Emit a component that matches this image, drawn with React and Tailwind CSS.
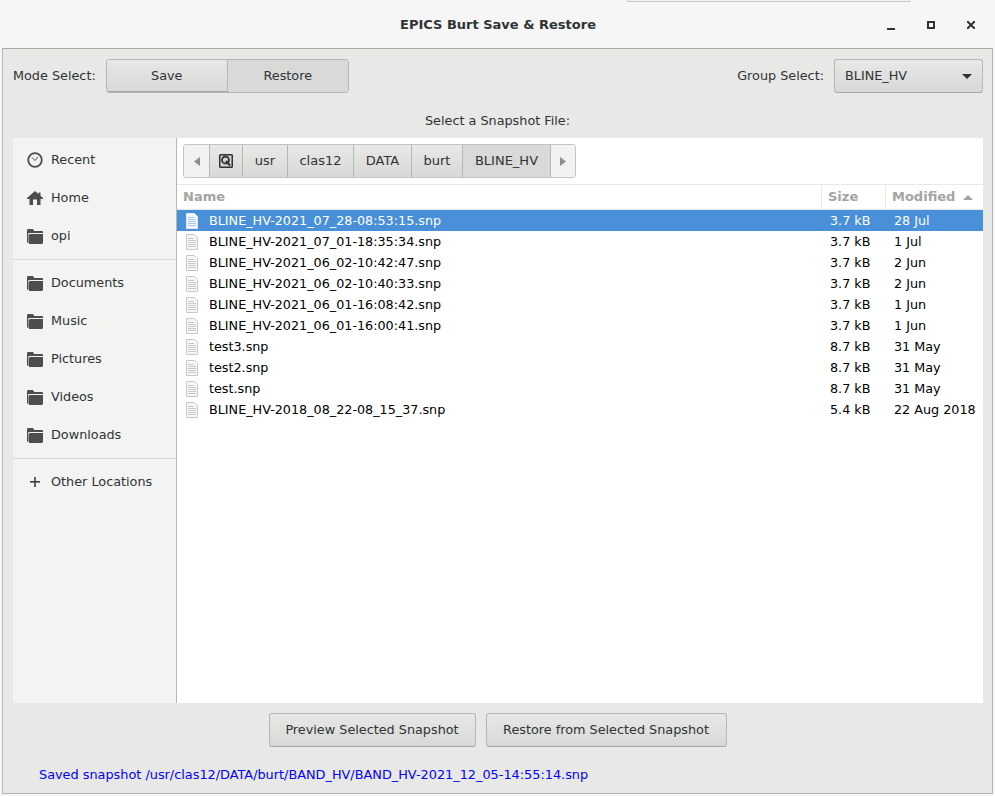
import React from 'react';

const files = [
  { name: 'BLINE_HV-2021_07_28-08:53:15.snp', size: '3.7 kB', date: '28 Jul' },
  { name: 'BLINE_HV-2021_07_01-18:35:34.snp', size: '3.7 kB', date: '1 Jul' },
  { name: 'BLINE_HV-2021_06_02-10:42:47.snp', size: '3.7 kB', date: '2 Jun' },
  { name: 'BLINE_HV-2021_06_02-10:40:33.snp', size: '3.7 kB', date: '2 Jun' },
  { name: 'BLINE_HV-2021_06_01-16:08:42.snp', size: '3.7 kB', date: '1 Jun' },
  { name: 'BLINE_HV-2021_06_01-16:00:41.snp', size: '3.7 kB', date: '1 Jun' },
  { name: 'test3.snp', size: '8.7 kB', date: '31 May' },
  { name: 'test2.snp', size: '8.7 kB', date: '31 May' },
  { name: 'test.snp', size: '8.7 kB', date: '31 May' },
  { name: 'BLINE_HV-2018_08_22-08_15_37.snp', size: '5.4 kB', date: '22 Aug 2018' },
];

function FolderIcon() {
  return (
    <svg width="16" height="16" viewBox="0 0 16 16">
      <path d="M0 2.500C0 1.700.5 1 1.300 1H6l1.200 2H15c.6 0 1 .4 1 1v1H2.500C1.700 5 1 5.700 1 6.500V15C.4 14.800 0 14.300 0 13.700z" fill="#4d4d4d" />
      <path d="M2 7C2 6.400 2.400 6 3 6h13v8.500c0 .8-.6 1.500-1.400 1.500H2z" fill="#4d4d4d" />
      <path d="M1.500 7v8" stroke="#9a9a98" />
    </svg>
  );
}

function ClockIcon() {
  return (
    <svg width="16" height="16" viewBox="0 0 16 16" fill="none" stroke="#4d4d4d">
      <circle cx="8" cy="8" r="6.800" strokeWidth="1.800" />
      <path d="M5 5.500 8 8.500l3-3.500" strokeWidth="1" />
    </svg>
  );
}

function HomeIcon() {
  return (
    <svg width="16" height="16" viewBox="0 0 16 16" fill="#4d4d4d">
      <path d="M8 1 0 8v1h2.500v6h11V9H16V8l-2.500-2.200V2.500h-2V4zM6 9.500h4V15H6z" fillRule="evenodd" />
    </svg>
  );
}

function PlusIcon() {
  return (
    <svg width="16" height="16" viewBox="0 0 16 16" fill="#3d3d3d">
      <rect x="3" y="7" width="10" height="1.600" />
      <rect x="7.200" y="3" width="1.600" height="10" />
    </svg>
  );
}

function FileIcon({ selected }) {
  const edge = selected ? '#dfe8f3' : '#c8c8c6';
  const fill = selected ? '#f4f7fb' : '#f7f7f6';
  const line = selected ? '#a9c4e6' : '#c8c8c6';
  return (
    <svg width="16" height="16" viewBox="0 0 16 16">
      <path d="M1.500.500h8l3 3v12h-11z" fill={fill} stroke={edge} />
      <path d="M3 4.500h6M3 6.500h8M3 8.500h8M3 10.500h8M3 12.500h8" stroke={line} />
    </svg>
  );
}

function DiskIcon() {
  return (
    <svg width="16" height="16" viewBox="0 0 16 16">
      <rect x="1" y="1" width="14" height="14" rx="1.500" fill="#2e3436" />
      <rect x="2.500" y="2.500" width="11" height="11" fill="#d4d4d2" />
      <circle cx="7.500" cy="7" r="3.500" fill="none" stroke="#2e3436" strokeWidth="1.800" />
      <path d="m8 8 4 4.500" stroke="#2e3436" strokeWidth="2" />
    </svg>
  );
}

function SidebarItem({ icon, label }) {
  return (
    <div className="flex h-[38px] items-center pl-[14px] text-[12.8px] text-[#2e3436]">
      {icon}
      <span className="ml-2">{label}</span>
    </div>
  );
}

function PathSegment({ children, active, className = '' }) {
  return (
    <div className={`flex h-full items-center justify-center border-r border-[#b6b6b3] text-[13px] text-[#2e3436] ${active ? 'bg-[#d9d9d7]' : 'bg-gradient-to-b from-[#e8e8e7] to-[#d8d8d6]'} ${className}`}>
      {children}
    </div>
  );
}

function PushButton({ children, className = '' }) {
  return (
    <button className={`flex h-[34px] items-center justify-center rounded-[3px] border border-[#b6b6b3] border-b-[#a5a5a2] bg-gradient-to-b from-[#e8e8e7] to-[#d8d8d6] text-[12.8px] text-[#2e3436] ${className}`}>
      {children}
    </button>
  );
}

export default function App() {
  return (
    <div className="relative flex h-[796px] w-[995px] flex-col overflow-hidden bg-[#f6f6f6] font-['DejaVu_Sans',sans-serif]">
      {/* bit of a menu from another window showing at the top */}
      <div className="absolute left-[626px] top-0 h-[2px] w-[285px] rounded-b-sm border-b border-[#c8c8c8] bg-[#f0f0f0]" />

      <div className="flex h-[48px] shrink-0 items-center pl-[400px] pr-[20px] pt-[2px]">
        <span className="text-[13px] font-bold text-[#2e3436]">EPICS Burt Save &amp; Restore</span>
        <div className="ml-auto flex items-center gap-[32px]">
          <div className="mt-[8px] h-[2px] w-[8px] bg-[#2e3436]" />
          <div className="h-[8px] w-[8px] border-2 border-[#2e3436]" />
          <svg width="8" height="8" viewBox="0 0 8 8" stroke="#2e3436" strokeWidth="2">
            <path d="M0 0l8 8M8 0l-8 8" />
          </svg>
        </div>
      </div>

      <div className="mx-[2px] mb-[2px] flex min-h-0 flex-1 flex-col border border-t-[#a8a8a3] border-x-[#b6b6b3] border-b-[#b6b6b3] bg-[#e8e8e7]">
        <div className="flex items-center pl-[10px] pr-[9px] pt-[10px] text-[12.8px] text-[#2e3436]">
          <span>Mode Select:</span>
          <div className="ml-[10px] flex h-[34px] w-[243px] overflow-hidden rounded-[3px] border border-[#b6b6b3]">
            <div className="flex w-[121px] items-center justify-center border-r border-[#b6b6b3] border-b border-b-[#a5a5a2] bg-gradient-to-b from-[#e8e8e7] to-[#d8d8d6]">Save</div>
            <div className="flex flex-1 items-center justify-center bg-[#d9d9d7]">Restore</div>
          </div>
          <span className="ml-auto">Group Select:</span>
          <PushButton className="ml-[10px] w-[149px] !justify-between pl-[10px] pr-[10px]">
            <span>BLINE_HV</span>
            <svg width="10" height="5" viewBox="0 0 10 5" fill="#2e3436"><path d="M0 0h10L5 5z" /></svg>
          </PushButton>
        </div>

        <div className="pt-[18px] text-center text-[12.8px] leading-[19px] text-[#2e3436]">Select a Snapshot File:</div>

        <div className="ml-[10px] mr-[9px] mt-[8px] flex h-[565px] bg-white">
          <div className="w-[164px] shrink-0 border-r border-[#b6b6b3] bg-[#f3f3f2] pt-[3px]">
            <SidebarItem icon={<ClockIcon />} label="Recent" />
            <SidebarItem icon={<HomeIcon />} label="Home" />
            <SidebarItem icon={<FolderIcon />} label="opi" />
            <div className="my-[4px] h-px bg-[#d9d9d7]" />
            <SidebarItem icon={<FolderIcon />} label="Documents" />
            <SidebarItem icon={<FolderIcon />} label="Music" />
            <SidebarItem icon={<FolderIcon />} label="Pictures" />
            <SidebarItem icon={<FolderIcon />} label="Videos" />
            <SidebarItem icon={<FolderIcon />} label="Downloads" />
            <div className="my-[4px] h-px bg-[#d9d9d7]" />
            <SidebarItem icon={<PlusIcon />} label="Other Locations" />
          </div>

          <div className="flex min-w-0 flex-1 flex-col">
            <div className="h-[47px] shrink-0 border-b border-[#e8e8e7] px-[6px] pt-[6px]">
              <div className="flex h-[34px] w-[393px] overflow-hidden rounded-[3px] border border-[#c4c4c1]">
                <div className="flex h-full w-[26px] items-center justify-center border-r border-[#b6b6b3] bg-[#f2f2f1]">
                  <svg width="6" height="9" viewBox="0 0 6 9" fill="#8d8f8c"><path d="M6 0v9L0 4.500z" /></svg>
                </div>
                <PathSegment className="w-[33px]"><DiskIcon /></PathSegment>
                <PathSegment className="w-[45px]">usr</PathSegment>
                <PathSegment className="w-[66px]">clas12</PathSegment>
                <PathSegment className="w-[58px]">DATA</PathSegment>
                <PathSegment className="w-[51px]">burt</PathSegment>
                <PathSegment active className="w-[88px]">BLINE_HV</PathSegment>
                <div className="flex h-full flex-1 items-center justify-center bg-[#f2f2f1]">
                  <svg width="6" height="9" viewBox="0 0 6 9" fill="#8d8f8c"><path d="M0 0v9l6-4.500z" /></svg>
                </div>
              </div>
            </div>

            <div className="flex h-[25px] shrink-0 border-b border-[#e8e8e7] text-[13px] font-bold text-[#a4a4a1]">
              <div className="flex flex-1 items-center border-r border-[#e8e8e7] pl-[6px]">Name</div>
              <div className="flex w-[64px] items-center border-r border-[#e8e8e7] pl-[6px]">Size</div>
              <div className="flex w-[97px] items-center pl-[6px]">
                Modified
                <svg className="ml-[8px]" width="10" height="5" viewBox="0 0 10 5" fill="#a4a4a1"><path d="M0 5h10L5 0z" /></svg>
              </div>
            </div>

            {files.map((f, i) => (
              <div key={f.name} className={`flex h-[21px] shrink-0 items-center text-[12.75px] ${i === 0 ? 'bg-[#4a90d9] text-white' : 'text-black'}`}>
                <div className="flex min-w-0 flex-1 items-center pl-[8px]">
                  <FileIcon selected={i === 0} />
                  <span className="ml-[8px]">{f.name}</span>
                </div>
                <div className="w-[64px] pl-[8px]">{f.size}</div>
                <div className="w-[97px] whitespace-nowrap pl-[8px]">{f.date}</div>
              </div>
            ))}
          </div>
        </div>

        <div className="mt-[10px] flex justify-center gap-[10px]">
          <PushButton className="w-[207px]">Preview Selected Snapshot</PushButton>
          <PushButton className="w-[241px]">Restore from Selected Snapshot</PushButton>
        </div>

        <div className="pl-[36px] pt-[18px] text-[12.85px] leading-[19px] text-[#0000ff]">
          Saved snapshot /usr/clas12/DATA/burt/BAND_HV/BAND_HV-2021_12_05-14:55:14.snp
        </div>
      </div>
    </div>
  );
}
